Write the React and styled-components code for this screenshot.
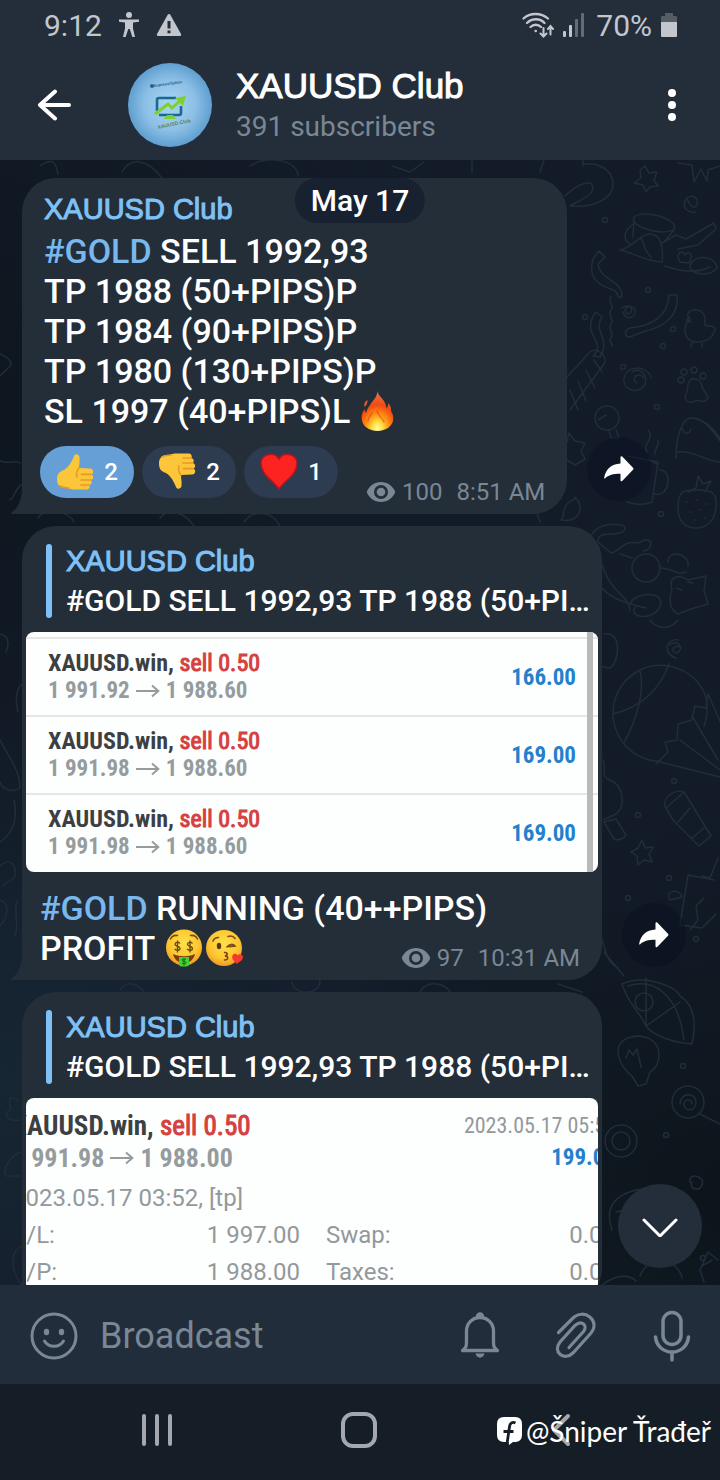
import React from "react";
import styled, { createGlobalStyle } from "styled-components";

const c = {
  panel: "#242e3a",
  bubble: "#242e39",
  accent: "#7fc1f7",
  link: "#78b8ee",
  muted: "#7a8794",
  composer: "#222d3b",
  nav: "#151e26",
  doodle: "#222c3a",
};

const Global = createGlobalStyle`
  *, *::before, *::after { box-sizing: border-box; }
  html, body { margin: 0; height: 100%; background: ${c.nav}; }
  body { font-family: Roboto, "Noto Sans", sans-serif; color: #fff; }
  button { border: 0; padding: 0; background: none; color: inherit; font: inherit; cursor: pointer; display: flex; align-items: center; justify-content: center; }
  svg { display: block; flex: none; }
  p, h1, h2 { margin: 0; font-weight: inherit; }
`;

const Screen = styled.div`
  position: relative;
  display: flex;
  flex-direction: column;
  height: 100vh;
  min-height: 600px;
  overflow: hidden;
`;

const StatusBar = styled.div`
  display: flex;
  align-items: center;
  justify-content: space-between;
  height: 50px;
  padding: 0 43px 0 44px;
  background: ${c.panel};
  color: #c3c7cd;
  font-size: 30px;
`;

const StatusGroup = styled.div`
  display: flex;
  align-items: center;
  gap: ${(p) => p.$gap}px;
`;

const Header = styled.header`
  display: flex;
  align-items: center;
  height: 110px;
  padding: 0 16px 0 22px;
  background: ${c.panel};
`;

const IconButton = styled.button`
  width: ${(p) => p.$w || 64}px;
  height: 64px;
`;

const Avatar = styled.div`
  width: 84px;
  height: 84px;
  margin: 0 24px 0 42px;
  border-radius: 50%;
  overflow: hidden;
  flex: none;
`;

const Titles = styled.div`
  flex: 1;
  min-width: 0;
  padding-top: 2px;
`;

const Title = styled.h1`
  font-family: "Liberation Sans", Arial, sans-serif;
  font-size: 35px;
  line-height: 42px;
  -webkit-text-stroke: 1px #fff;
`;

const Subtitle = styled.p`
  font-size: 28px;
  line-height: 40px;
  color: ${c.muted};
`;

const Chat = styled.main`
  position: relative;
  flex: 1;
  min-height: 0;
  overflow: hidden;
  background:
    radial-gradient(ellipse 60% 45% at 0% 22%, #0e171f, transparent),
    radial-gradient(ellipse 60% 35% at 0% 82%, #172633, transparent),
    radial-gradient(ellipse 60% 35% at 100% 92%, #0d151b, transparent),
    #131b29;
`;

const Wallpaper = styled.svg`
  position: absolute;
  top: 0;
  right: 0;
`;

const DatePill = styled.div`
  position: absolute;
  top: 18px;
  left: 50%;
  transform: translateX(-50%);
  padding: 0 16px;
  border-radius: 23px;
  background: #172130;
  font-size: 30px;
  font-weight: 500;
  line-height: 45px;
  white-space: nowrap;
`;

const Messages = styled.div`
  position: relative;
  display: flex;
  flex-direction: column;
  gap: 12px;
  padding: 18px 16px 0 22px;
`;

const MessageRow = styled.div`
  display: flex;
  align-items: flex-end;
  gap: 20px;
`;

const Bubble = styled.article`
  position: relative;
  flex: 0 1 ${(p) => (p.$media ? "580px" : "auto")};
  min-width: 0;
  padding: ${(p) => (p.$media ? "14px 4px 12px" : "9px 22px 16px")};
  border-radius: 34px 34px 34px 0;
  background: ${c.bubble};
`;

const Tail = styled.svg`
  position: absolute;
  left: -11px;
  bottom: 0;
`;

const Sender = styled.h2`
  font-family: "Liberation Sans", Arial, sans-serif;
  font-size: 29px;
  line-height: ${(p) => (p.$reply ? 40 : 44)}px;
  color: ${c.accent};
  -webkit-text-stroke: 1px ${c.accent};
`;

const Line = styled.p`
  display: flex;
  align-items: center;
  font-size: 34px;
  font-weight: 500;
  line-height: 40px;
  white-space: pre;

  svg { margin-left: 2px; }
`;

const Hashtag = styled.a`
  color: ${c.link};
  text-decoration: none;
`;

const Footer = styled.div`
  display: flex;
  align-items: flex-end;
  gap: 28px;
  margin: 15px 0 0 -4px;
`;

const Reactions = styled.div`
  display: flex;
  gap: 8px;
`;

const Reaction = styled.button`
  width: 94px;
  height: 52px;
  border-radius: 26px;
  gap: 10px;
  background: ${(p) => (p.$on ? "#659fd6" : "#2d3c50")};
  font-size: 24px;
  font-weight: 500;
`;

const Meta = styled.div`
  display: flex;
  align-items: center;
  font-size: 24px;
  line-height: 28px;
  color: ${c.muted};
  white-space: nowrap;
  margin-bottom: ${(p) => (p.$inFooter ? -8 : -4)}px;

  span { margin-left: 6px; }
  time { margin-left: 14px; }
`;

const ShareButton = styled.button`
  width: 64px;
  height: 64px;
  margin-bottom: 13px;
  border-radius: 50%;
  background: rgba(9, 15, 30, 0.45);
  flex: none;
`;

const Reply = styled.div`
  display: flex;
  gap: 14px;
  margin: 4px 4px 14px 20px;
`;

const ReplyBar = styled.div`
  width: 6px;
  border-radius: 3px;
  background: ${c.accent};
  flex: none;
`;

const ReplyBody = styled.div`
  min-width: 0;
  height: 77px;
  margin-top: -3px;
`;

const ReplyText = styled.p`
  font-size: 30px;
  font-weight: 500;
  line-height: 40px;
  white-space: nowrap;
  overflow: hidden;
  text-overflow: ellipsis;
`;

const Picture = styled.div`
  position: relative;
  overflow: hidden;
  border-radius: 8px;
  background: #fdfefe;
  color: #93999b;
  font-family: "Roboto Condensed", "Liberation Sans Narrow", Roboto, sans-serif;
`;

const Scrollbar = styled.div`
  position: absolute;
  top: 0;
  bottom: 0;
  right: 5px;
  width: 6px;
  background: #b9b9b9;
`;

const Trade = styled.div`
  display: flex;
  align-items: center;
  justify-content: space-between;
  height: 78px;
  padding: 0 22px;
  border-top: 2px solid #e4e6e7;

  &:first-child { margin-top: 5px; }
  &:nth-child(3) { margin-bottom: 1px; }
`;

const TradeName = styled.p`
  font-size: ${(p) => (p.$large ? 27 : 24)}px;
  line-height: ${(p) => (p.$large ? 32 : 27)}px;
  font-weight: 700;
  color: #3c4042;
  white-space: nowrap;
`;

const Sell = styled.span`
  color: #d6403e;
  font-weight: 400;
  -webkit-text-stroke: 1px #d6403e;
`;

const Prices = styled.p`
  display: flex;
  align-items: center;
  gap: 6px;
  font-size: ${(p) => (p.$large ? 26 : 23)}px;
  line-height: ${(p) => (p.$large ? 32 : 27)}px;
  font-weight: 700;
  color: #969c9d;
  white-space: nowrap;
`;

const Profit = styled.strong`
  font-size: 23px;
  color: #2480cc;
`;

const Sheet = styled.div`
  margin: 0 -18px 0 -14px;
  padding-top: 12px;
`;

const SheetTop = styled.div`
  display: flex;
  justify-content: space-between;
`;

const SheetDate = styled.div`
  font-size: 22px;
  line-height: 32px;
  text-align: right;
`;

const Note = styled.p`
  margin-top: 5px;
  font-family: Roboto, sans-serif;
  font-size: 24px;
  line-height: 38px;
`;

const Details = styled.table`
  width: 100%;
  table-layout: fixed;
  border-collapse: collapse;
  font-family: Roboto, sans-serif;
  font-size: 24px;
  line-height: 37px;

  th, td { padding: 0; font-weight: 400; text-align: left; }
  td { text-align: right; }
  th:first-child, td:nth-child(2) { width: 144px; }
  th:nth-child(3) { padding-left: 26px; }
`;

const Caption = styled.div`
  padding: 16px 18px 0 14px;
`;

const CaptionEnd = styled.div`
  display: flex;
  justify-content: space-between;
  align-items: flex-end;
`;

const DownButton = styled.button`
  position: absolute;
  right: 18px;
  bottom: 17px;
  width: 84px;
  height: 84px;
  border-radius: 50%;
  background: #242e3b;
`;

const Composer = styled.form`
  display: flex;
  align-items: center;
  height: 99px;
  padding: 2px 0 0 22px;
  background: ${c.composer};
  color: ${c.muted};
  flex: none;
`;

const Field = styled.input`
  flex: 1;
  min-width: 0;
  margin-left: 14px;
  padding: 0;
  border: 0;
  outline: 0;
  background: none;
  color: #fff;
  font-family: Roboto, sans-serif;
  font-size: 36px;

  &::placeholder { color: ${c.muted}; opacity: 1; }
`;

const NavBar = styled.nav`
  position: relative;
  display: flex;
  height: 96px;
  padding: 0 58px 4px 56px;
  background: ${c.nav};
  color: #a4a8ae;
  flex: none;
`;

const NavButton = styled.button`
  flex: 1;
`;

const Watermark = styled.div`
  position: absolute;
  right: 9px;
  bottom: 29px;
  display: flex;
  align-items: center;
  gap: 4px;
  font-family: Lato, sans-serif;
  font-size: 28px;
  line-height: 40px;
  color: #fff;
`;

const ThumbUp = ({ flip }) => (
  <svg width="38" height="40" viewBox="0 0 38 40" role="img" aria-label={flip ? "thumbs down" : "thumbs up"}>
    <g transform={flip ? "translate(0 39) scale(1 -1)" : undefined}>
      <path d="M18 4c1-3 5-2 5.500 1 .6 4-.5 7-.5 11l11 .5c4 .3 4 5 1.500 5.800 2.500 1.500 2 5-.5 5.700 1.500 2 .5 4.500-1.500 5 1 2.500-.8 4.500-3 4.500H18c-4 0-5-1.500-9-1.500-5 0-8-3-8-8.500C1 21 4 19.500 8 18c5-3 8-9 10-14z" fill="#fcc63a" />
      <path d="M35 22.300H25.500M34.500 28H25M33 33H25M23 16c-2 2-3 6-2 9M4 34c3 2 6 1.500 9 2" fill="none" stroke="#e79a22" strokeWidth="1.700" strokeLinecap="round" />
    </g>
  </svg>
);

const Heart = () => (
  <svg width="38" height="40" viewBox="0 0 38 40" role="img" aria-label="red heart">
    <path d="M19 37C14 29 1 23 1 11.500 1 2 14-1 19 7c5-8 18-5 18 4.500C37 23 24 29 19 37z" fill="#fd2321" stroke="#b3161c" strokeWidth="1.500" />
  </svg>
);

const Fire = () => (
  <svg width="33" height="40" viewBox="0 0 33 40" role="img" aria-label="fire">
    <defs>
      <radialGradient id="flame" cx="50%" cy="94%" r="85%">
        <stop offset="0" stopColor="#fffbb0" />
        <stop offset="0.22" stopColor="#ffd836" />
        <stop offset="0.45" stopColor="#ff8a14" />
        <stop offset="0.7" stopColor="#f04a12" />
        <stop offset="1" stopColor="#f4673a" />
      </radialGradient>
    </defs>
    <path d="M16.500 0c0 5 8 8 9 17 1.500-1 2-3 1.600-5 2.500 2 3 5 3 8 1.500 3 2.400 5 2.200 8C32 35 25 40 16.500 40S.8 35 .6 27c-.2-4 1.600-7 3.400-9 0 2 .3 3 1.200 4C6 18 7.500 16 10 12.500 12.500 9 16 6 16.500 0zM6.500 9c0 3-1 5-2.700 7C2.500 13 3.500 11 6.500 9z" fill="url(#flame)" />
    <path d="M16 20c1 5 6 7 7 11M11 22c-2 3-4 5-4 8" fill="none" stroke="#e2350e" strokeWidth="1.500" opacity="0.5" strokeLinecap="round" />
  </svg>
);

const faceGradient = (
  <radialGradient id="face" cx="50%" cy="38%" r="65%">
    <stop offset="0" stopColor="#ffe14b" />
    <stop offset="0.65" stopColor="#fcc630" />
    <stop offset="1" stopColor="#ee9320" />
  </radialGradient>
);

const MoneyFace = () => (
  <svg width="38" height="38" viewBox="0 0 38 38" role="img" aria-label="money-mouth face">
    <defs>{faceGradient}</defs>
    <circle cx="19" cy="18.500" r="18" fill="url(#face)" />
    <path d="M5.500 10c1.500-3 4-4 7-3.500M25.500 6.500c3-.5 5.500.5 7 3.500" fill="none" stroke="#7a4a12" strokeWidth="1.500" strokeLinecap="round" />
    <path d="M15 14.500c-1-1.800-5-1.500-5 .7 0 2.600 5 1.500 5 4.200 0 2.200-4 2.500-5.300.5M12.500 11.500v12M27.500 14.500c-1-1.800-5-1.500-5 .7 0 2.600 5 1.500 5 4.200 0 2.200-4 2.500-5.300.5M25 11.500v12" fill="none" stroke="#6b4b12" strokeWidth="1.400" />
    <path d="M8 25c7 3 15 3 22 0-1 5-5 9-11 9S9 30 8 25z" fill="#7b3a14" />
    <path d="M14 28h10v8c0 2-10 2-10 0z" fill="#3ed32d" />
    <path d="M21 30.500c-1-1-4-1-4 .5s4 1 4 2.600-3 1.500-4 .4M19 29v7.500" fill="none" stroke="#126b16" />
  </svg>
);

const KissFace = () => (
  <svg width="39" height="38" viewBox="0 0 39 38" role="img" aria-label="face blowing a kiss">
    <circle cx="19" cy="19" r="18" fill="url(#face)" />
    <path d="M8 12c1-2.500 3-3.500 5.500-3.500M23 7.500c3-1 5.500-.3 7 2M22 18c2-3 6-3.500 8-1l-6 .6" fill="none" stroke="#7a4a12" strokeWidth="1.600" strokeLinecap="round" />
    <ellipse cx="14" cy="17" rx="2.200" ry="3.200" fill="#5b3713" />
    <path d="M19.500 23.500c3-.5 4 2.500.5 3.500 4 0 3.500 4-.5 4" fill="none" stroke="#7a3c12" strokeWidth="1.500" strokeLinecap="round" />
    <path d="M32 35c-2-2-6-5-4.500-8.500 1-2.500 4-2.500 5 0 2-2.500 5.500-1 5.500 1.500 0 3.500-4 5-6 7z" fill="#f4392f" />
  </svg>
);

const Eye = () => (
  <svg width="30" height="22" viewBox="0 0 30 22" fill="none" aria-hidden="true">
    <path fillRule="evenodd" d="M15 1C8.500 1 3 5 .7 11 3 17 8.500 21 15 21s12-4 14.300-10C27 5 21.500 1 15 1zm0 17a7 7 0 1 1 0-14 7 7 0 0 1 0 14z" fill="currentColor" />
    <circle cx="15" cy="11" r="4.300" fill="currentColor" />
  </svg>
);

const BubbleTail = () => (
  <Tail width="12" height="26" viewBox="0 0 12 26" aria-hidden="true">
    <path d="M12 0v26H1c-1 0-1.300-1-.5-1.600C7 20 11 12 11 0z" fill={c.bubble} />
  </Tail>
);

const Share = () => (
  <ShareButton aria-label="Share">
    <svg width="30" height="26" viewBox="0 0 30 26" aria-hidden="true">
      <path d="M16.500 1.200c0-1 1-1.300 1.700-.6L29 11.800c.6.600.6 1.300 0 1.900L18.200 24.900c-.7.700-1.700.4-1.700-.6v-6.500C9 17.800 4.500 19 1.200 22.300c-.6.600-1.200.3-1-.6C1.500 13.500 7 7.800 16.500 7.400z" fill="#fff" />
    </svg>
  </ShareButton>
);

const Arrow = () => (
  <svg width="24" height="14" viewBox="0 0 24 14" fill="none" stroke="currentColor" strokeWidth="2" aria-label="to" role="img">
    <path d="M0 7h22M16 1.500 22.300 7 16 12.500" />
  </svg>
);

const ReplyQuote = () => (
  <Reply>
    <ReplyBar />
    <ReplyBody>
      <Sender $reply>XAUUSD Club</Sender>
      <ReplyText>#GOLD SELL 1992,93 TP 1988 (50+PIPS)P TP 1984</ReplyText>
    </ReplyBody>
  </Reply>
);

const trades = [
  { from: "1 991.92", to: "1 988.60", profit: "166.00" },
  { from: "1 991.98", to: "1 988.60", profit: "169.00" },
  { from: "1 991.98", to: "1 988.60", profit: "169.00" },
];

const reactions = [
  { icon: <ThumbUp />, count: 2, on: true },
  { icon: <ThumbUp flip />, count: 2 },
  { icon: <Heart />, count: 1 },
];

const Doodles = () => (
  <Wallpaper width="720" height="1125" viewBox="0 0 720 1125" fill="none" stroke={c.doodle} strokeWidth="1.500" strokeLinejoin="round" strokeLinecap="round" aria-hidden="true">
    <path d="M584 4c14-2 29 6 29 20 0 16-22 24-43 22 10-6 22-10 23-18 0-10-16-4-28 8M583 0v6" />
    <path d="m645 6 4 7 8-1-3 8 4 6-8 1-4 5-3-7-9-2 7-5-1-8zM678 3l14 2 2 17 7-13 6 12 1-11 12-4" />
    <path d="M689 42c-5-5-1-3 1 2 3 6 9 2 7-4-2-5-10-5-12 1-3 7 3 12 10 11" />
    <ellipse cx="654" cy="63" rx="21" ry="8" transform="rotate(12 654 63)" />
    <path d="M634 60l-1 17M674 70l-10 12M633 64c-10 8-10 16-3 20M620 90c12-2 20-16 30-16s14 12 12 28c-18-1-30-10-42-12zM641 77l5 14 5 6M662 83l14-8 10 4 28-16 2 6-18 16-20 4M665 106c15 5 30 8 45 1M680 102c-5-8 2-14 5-7 4-6 9 0 4 8zM690 108c0-14 26-14 27 0-6 8-22 8-27 0z" />
    <path d="m599 91-6 8c-6 20 8 27 18 30 6 2 7 5 7 8h4c0-18-22-16-24-33l7-7z" />
    <path d="M669 135h8c3 24-20 34-32 36l-15 6c-6 0-6-7 0-9 22-2 38-12 39-33zM611 136c-4 6 4 9 0 14s4 9 0 14 4 9 0 14 3 5 1 8" />
    <path d="M622 148c8-6 14 3 6 6-7-3 0-11 7-5 2 10-10 12-12 3M596 152c-10 12-4 22 0 29 3 7 1 12-3 15l7 1c12-19-8-25 2-40z" />
    <path d="M690 160c-10-11 15-16 15 0 0 5-2 6 4 6 6 0 8 3 4 8-4 9-22 11-26 3-4-6-2-14 3-17zM690 157l-4 3 5 2M691 187l1-4M702 187v-4" />
    <path d="m566 218 24-26c7-6 18 4 14 12l-34 46M570 230l8 20M578 221l8 20M586 210l9 18M594 200l8 12M632 212c7-6 18 4 12 14-8 9-22 3-20-8 3-13 21-13 27-1M644 218c-7-8-14 2-7 5" />
    <path d="M688 224c4-10 14-4 14 3l6 10c-2 8-8 2-13 4-8 4-12-2-8-9z" />
    <circle cx="681" cy="220" r="3" /><circle cx="684" cy="212" r="3" /><circle cx="694" cy="210" r="3" /><circle cx="703" cy="216" r="3" />
    <circle cx="607" cy="258" r="12" />
    <path d="m598 260 8-5M609 270l2 8h8l-3-8M648 270c8 9-7 14-1 22M658 280c2 6-4 8-3 14" />
    <path d="M676 298c0-22 6-38 14-40 16-2 28 20 40 38M690 258c20 0 32 22 34 30M682 268c2 7 7 7 9 1M676 292c20-2 30 10 44 10" />
    <path d="m567 282 2-9 6 8 10 2-4 8 4 8-10 6-8-5" />
    <path d="m628 296 30 6-6 40c-8 4-20 2-25 0M660 310c13 0 10 28-6 24M657 304l-4-2M561 360c4-3 1-10 6-16 4-5 8-2 8-7 10 10 5 26-14 23z" />
    <path d="M678 348c0-20 8-18 20-18s20 2 18 18c-2 14-10 20-20 20s-18-6-18-20z" />
    <path d="m688 332 8-4 2-12 5 8 8-3-6 11M686 342h1M696 340h1M706 344h1M690 352h1M700 350h1M694 360h1M704 358h1" />
    <path d="M588 392c-2-34 34-28 36-26 4 6-6 8-14 8-11 0-14 5-11 9l12 10c9-1 10-13 28-10 14-10 16 7 4 8M602 405c10 30 26 28 28 46M620 394l12 4M602 428c10 12 28 16 44 20" />
    <circle cx="646" cy="408" r="14" />
    <path d="M660 408c12 0 18 8 26 4M668 402c0-14 22-8 20 4M672 430c-4-14 6-16 16-10l18-4-2 14 4 14-14 4-16 6c-8-4-10-14-6-24zM676 428l6 2M688 422l5 1M636 446c-10 12 18 16 24 0s-26-14-30-2M650 460c8 10 20 10 28 0" />
    <path d="M604 474c18-4 16 28 6 34l-12-2M670 485c8-7 15 4 7 8-7-1-4-9 3-6M676 498c-14-4-10-20 2-18" />
    <path d="M656 601A48 48 0 1 1 704 532c4 10 4 24 0 34" />
    <path d="M640 511c5 20-3 48-16 72M669 504c-8 22-24 42-56 50M656 604l12-12-3-10 12-2 1-16 14-4 3-14 11 2 2-14 30 68M656 601l64 16M680 580l40 30M692 556l26 44" />
    <path d="M603 600c4 10-3 16 7 20 14 6 16 26 6 34l-13 6M604 662l12-3 10 16c-2 4-8 6-12 4z" />
    <path d="m666 648 18-16 5 8 22 36-12 10-26-26zM666 648c-6-8 8-20 18-16M690 648l-12 14M704 668l-12 10" />
    <path d="m642 680 3 8 8-1-4 7 3 8-8-2-6 5-1-9-6-4 7-4zM702 716l8 2 8-20M716 754l-14 14-22-3 8-50 26 5M670 740c-6-12 12-10 12-3zM690 770l8-10-2-14 8-8" />
    <path d="M602 780c4 10 4 22 16 28M604 792l20 24" />
    <path d="M622 824c22-10 54 2 58 12 16 10 16 30 12 48-24-2-40-10-46-18-6-14-18-22-24-42zM646 866v-48M646 866l34-24M628 826c24-8 50 6 56 54" />
    <circle cx="644" cy="842" r="9" />
    <path d="M632 916c-12-8-26-36 4-40 30 0 26 30 14 36l-4 12-8 2zM626 898l3-8 4 5 4-6 4 18" />
    <circle cx="688" cy="942" r="16" />
    <path d="M680 944c0-12 16-12 16-2 0 10-12 10-12 2 0-6 8-5 8 0M700 954l20 10M690 1022c-2-10 16-6 12 3-3 8-14 3-10-3" />
    <circle cx="621" cy="981" r="16" /><circle cx="621" cy="981" r="9" />
    <path d="M612 1070c-12-34 20-44 52-41-8 8-8 20-6 30M616 1052c10-2 24-6 36-20M602 1125c16-12 28-10 34-4M640 1116c8-22 38-18 42 2M704 1122l-4-12 8-18 10 8M702 1106l10-6" />
    {[[605, 60], [648, 130], [585, 157], [673, 169], [663, 186], [623, 207], [657, 247], [661, 354], [674, 621], [638, 655], [669, 718], [628, 738], [696, 779], [683, 906], [666, 975], [703, 1098]].map(([x, y]) => (
      <circle key={`${x}-${y}`} cx={x} cy={y} r="2.500" />
    ))}
    <path d="M0 194c10 4 14 10 8 14L0 216M0 301c10 4 16-2 20 2M10 340c4-2 6-12 11-15M0 474c8 2 10 8 6 18M22 524c-8 8-6 20-4 28M0 580c8 16 20 30 20 48-8 6-18 0-20-6M14 640c4 20-2 34-14 42M0 706c10-10 18 0 14 12L2 726M0 740c12 4 6 20 0 26M18 740c-6 8 2 24-3 36M18 940c-16-8-4 10-8 10s-8 12 10 10M20 992c-10 6-18 16-14 24h14M22 1086c-10 4-14 20 0 40" />
    <path d="M40 6c14-10 16-2 18 8M122 12c10-18 28-10 40 6M250 6c16-12 48-6 48 10M392 6l18 6 14-10M472 0v12M540 12l4-12M160 358c10-12 26-4 34 8M244 362c8-12 28-12 36 4M38 358c6-10 30-8 36 4M540 362l-4-12M120 830c8-12 20-4 24 2M292 822c2 14 28 14 28-2M420 832c6-12 24-10 30 0M558 824l24 8" />
  </Wallpaper>
);

export default function App() {
  return (
    <Screen>
      <Global />
      <StatusBar>
        <StatusGroup $gap={16}>
          <span>9:12</span>
          <svg width="22" height="26" viewBox="0 0 22 26" fill="currentColor" aria-hidden="true">
            <circle cx="11" cy="3" r="3" />
            <path d="M1 7.500h20v2.300l-6 .7v6L17 25h-2.600L11.700 17h-1.400L7.600 25H5l2-8.500v-6l-6-.7z" />
          </svg>
          <svg width="26" height="24" viewBox="0 0 26 24" aria-hidden="true">
            <path d="M11.700 1.700c.6-1 2-1 2.600 0L25 21c.5 1 0 2-1.200 2H2.200C1 23 .5 22 1 21z" fill="currentColor" />
            <path d="M11.500 8h3v7.500h-3zM11.500 17.500h3v2.700h-3z" fill={c.panel} />
          </svg>
        </StatusGroup>
        <StatusGroup $gap={9}>
          <svg width="32" height="26" viewBox="0 0 32 26" fill="none" stroke="currentColor" strokeWidth="2.300" strokeLinecap="round" aria-hidden="true">
            <path d="M1.500 6.500C8 .5 19 .5 26 6.500M5 11c5-5 13-5 17.500 0M8.500 15c3-3 7.500-3 10.500 0" />
            <circle cx="13.700" cy="19" r="1.300" fill="currentColor" stroke="none" />
            <path d="M21.500 16v8M18.500 21.500l3 3 3-3M28.500 22.500v-8M26 17l2.500-3 2.500 3" strokeWidth="2" />
          </svg>
          <svg width="24" height="24" viewBox="0 0 24 24" fill="currentColor" aria-hidden="true">
            <rect x="0" y="18" width="3" height="6" rx="1" />
            <rect x="6" y="12" width="3" height="12" rx="1" />
            <rect x="12" y="6" width="3" height="18" rx="1" opacity="0.400" />
            <rect x="18" y="0" width="3" height="24" rx="1" opacity="0.400" />
          </svg>
          <span>70%</span>
          <svg width="16" height="24" viewBox="0 0 16 24" fill="currentColor" aria-hidden="true">
            <path d="M4 0h8v3h3q1 0 1 1v5H0V4q0-1 1-1h3z" opacity="0.300" />
            <path d="M0 9h16v14q0 1-1 1H1q-1 0-1-1z" />
          </svg>
        </StatusGroup>
      </StatusBar>

      <Header>
        <IconButton aria-label="Back">
          <svg width="34" height="32" viewBox="0 0 34 32" fill="none" stroke="#fff" strokeWidth="4" strokeLinecap="round" strokeLinejoin="round">
            <path d="M32 16H3M18 2.500 3 16l15 13.500" />
          </svg>
        </IconButton>
        <Avatar>
          <svg width="84" height="84" viewBox="0 0 84 84" role="img" aria-label="Channel photo">
            <defs>
              <radialGradient id="sky">
                <stop offset="0" stopColor="#a9d5f2" />
                <stop offset="0.600" stopColor="#8dc0e6" />
                <stop offset="1" stopColor="#5f9fd0" />
              </radialGradient>
            </defs>
            <rect width="84" height="84" fill="url(#sky)" />
            <circle cx="24" cy="23" r="2" fill="#27618f" />
            <text x="26" y="24" fontFamily="Liberation Sans" fontSize="4" fontWeight="700" fill="#27618f" transform="rotate(-8 26 24)">ExpressOption</text>
            <path d="M29 48V37q0-2 2-2h17M53 43v7q0 2-2 2H31" fill="none" stroke="#1a6a90" strokeWidth="2.600" />
            <path d="m27 51 13-10 4 4 9-8" fill="none" stroke="#7ed02c" strokeWidth="3" />
            <path d="m47 35 11-2-3 10zM39 52h6l3 4H36z" fill="#7ed02c" />
            <text x="30" y="66" fontFamily="Liberation Sans" fontSize="5" fontWeight="700" fill="#5d7f55" transform="rotate(-12 30 66)">XAUUSD.Club</text>
          </svg>
        </Avatar>
        <Titles>
          <Title>XAUUSD Club</Title>
          <Subtitle>391 subscribers</Subtitle>
        </Titles>
        <IconButton aria-label="More options">
          <svg width="8" height="32" viewBox="0 0 8 32" fill="#fff">
            <circle cx="4" cy="4" r="4" /><circle cx="4" cy="16" r="4" /><circle cx="4" cy="28" r="4" />
          </svg>
        </IconButton>
      </Header>

      <Chat>
        <Doodles />
        <Messages>
          <MessageRow>
            <Bubble>
              <BubbleTail />
              <Sender>XAUUSD Club</Sender>
              <Line><Hashtag href="#gold">#GOLD</Hashtag> SELL 1992,93</Line>
              <Line>TP 1988 (50+PIPS)P</Line>
              <Line>TP 1984 (90+PIPS)P</Line>
              <Line>TP 1980 (130+PIPS)P</Line>
              <Line>SL 1997 (40+PIPS)L <Fire /></Line>
              <Footer>
                <Reactions>
                  {reactions.map((r, i) => (
                    <Reaction key={i} $on={r.on}>{r.icon}{r.count}</Reaction>
                  ))}
                </Reactions>
                <Meta $inFooter><Eye /><span>100</span><time>8:51 AM</time></Meta>
              </Footer>
            </Bubble>
            <Share />
          </MessageRow>

          <MessageRow>
            <Bubble $media>
              <BubbleTail />
              <ReplyQuote />
              <Picture>
                {trades.map((t, i) => (
                  <Trade key={i}>
                    <div>
                      <TradeName>XAUUSD.win, <Sell>sell 0.50</Sell></TradeName>
                      <Prices>{t.from}<Arrow />{t.to}</Prices>
                    </div>
                    <Profit>{t.profit}</Profit>
                  </Trade>
                ))}
                <Scrollbar />
              </Picture>
              <Caption>
                <Line><Hashtag href="#gold">#GOLD</Hashtag> RUNNING (40++PIPS)</Line>
                <CaptionEnd>
                  <Line>PROFIT <MoneyFace /><KissFace /></Line>
                  <Meta><Eye /><span>97</span><time>10:31 AM</time></Meta>
                </CaptionEnd>
              </Caption>
            </Bubble>
            <Share />
          </MessageRow>

          <MessageRow>
            <Bubble $media>
              <ReplyQuote />
              <Picture>
                <Sheet>
                  <SheetTop>
                    <div>
                      <TradeName $large>XAUUSD.win, <Sell>sell 0.50</Sell></TradeName>
                      <Prices $large>1 991.98<Arrow />1 988.00</Prices>
                    </div>
                    <SheetDate>2023.05.17 05:55<br /><Profit>199.00</Profit></SheetDate>
                  </SheetTop>
                  <Note>2023.05.17 03:52, [tp]</Note>
                  <Details>
                    <tbody>
                      <tr><th>S/L:</th><td>1 997.00</td><th>Swap:</th><td>0.00</td></tr>
                      <tr><th>T/P:</th><td>1 988.00</td><th>Taxes:</th><td>0.00</td></tr>
                    </tbody>
                  </Details>
                </Sheet>
              </Picture>
            </Bubble>
          </MessageRow>
        </Messages>
        <DatePill>May 17</DatePill>
        <DownButton aria-label="Scroll to latest">
          <svg width="36" height="22" viewBox="0 0 36 22" fill="none" stroke="#fff" strokeWidth="3" strokeLinecap="round" strokeLinejoin="round">
            <path d="m2 5 16 16L34 5" />
          </svg>
        </DownButton>
      </Chat>

      <Composer onSubmit={(e) => e.preventDefault()}>
        <IconButton type="button" aria-label="Emoji">
          <svg width="48" height="48" viewBox="0 0 48 48" fill="none" stroke="currentColor" strokeWidth="3" strokeLinecap="round">
            <circle cx="24" cy="24" r="22" />
            <path d="M14.500 29c4 7 15 7 19 0" />
            <ellipse cx="16.500" cy="20" rx="2.700" ry="3.200" fill="currentColor" stroke="none" />
            <ellipse cx="31.500" cy="20" rx="2.700" ry="3.200" fill="currentColor" stroke="none" />
          </svg>
        </IconButton>
        <Field placeholder="Broadcast" aria-label="Broadcast" />
        <IconButton type="button" $w={96} aria-label="Notifications">
          <svg width="40" height="48" viewBox="0 0 40 48" fill="none" stroke="currentColor" strokeWidth="3.300" strokeLinejoin="round">
            <path d="M2.500 38.500c4-3 4-5 4-9V19a13.500 13.500 0 0 1 27 0v10.500c0 4 0 6 4 9z" />
            <path d="M17.500 4.500a2.500 2.500 0 0 1 5 0" fill="currentColor" />
            <path d="M15.500 41.500h9c-1 5.500-8 5.500-9 0z" fill="currentColor" stroke="none" />
          </svg>
        </IconButton>
        <IconButton type="button" $w={96} aria-label="Attach">
          <svg width="42" height="50" viewBox="0 0 42 50" fill="none" stroke="currentColor" strokeWidth="3.200" strokeLinecap="round">
            <path d="M3.500 21.500 17.500 7.500C29-4 46 10 36 22L18.500 41.500C9 51-3 41 5 31L20 14.500c7-6 13 0 8.500 6L14 36.500" />
          </svg>
        </IconButton>
        <IconButton type="button" $w={96} aria-label="Record voice">
          <svg width="38" height="52" viewBox="0 0 38 52" fill="none" stroke="currentColor" strokeWidth="3.500" strokeLinecap="round">
            <rect x="10" y="2.500" width="18" height="32" rx="9" />
            <path d="M2.500 27c2 20 31 20 33 0M19 42v8" />
          </svg>
        </IconButton>
      </Composer>

      <NavBar>
        <NavButton aria-label="Recent apps">
          <svg width="32" height="34" viewBox="0 0 32 34" fill="none" stroke="currentColor" strokeWidth="4" strokeLinecap="round">
            <path d="M3 3v28M16 3v28M29 3v28" />
          </svg>
        </NavButton>
        <NavButton aria-label="Home">
          <svg width="36" height="36" viewBox="0 0 36 36" fill="none" stroke="currentColor" strokeWidth="4">
            <rect x="2" y="2" width="32" height="32" rx="10" />
          </svg>
        </NavButton>
        <NavButton aria-label="Back">
          <svg width="20" height="34" viewBox="0 0 20 34" fill="none" stroke="currentColor" strokeWidth="4" strokeLinecap="round" strokeLinejoin="round">
            <path d="M17 3 3 17l14 14" />
          </svg>
        </NavButton>
        <Watermark>
          <svg width="25" height="28" viewBox="0 0 25 28" aria-hidden="true">
            <path d="M7 0h11q7 0 7 7v11q0 6-6 7h-3l-4 3-.5-3H7q-7 0-7-7V7q0-7 7-7z" fill="#fff" />
            <path d="M18.500 6c-3-1.500-5.500 0-6 3.500L10 27M6.500 14.500h10" fill="none" stroke={c.nav} strokeWidth="2.800" />
          </svg>
          <span>@Šniper Ťrađeř</span>
        </Watermark>
      </NavBar>
    </Screen>
  );
}
